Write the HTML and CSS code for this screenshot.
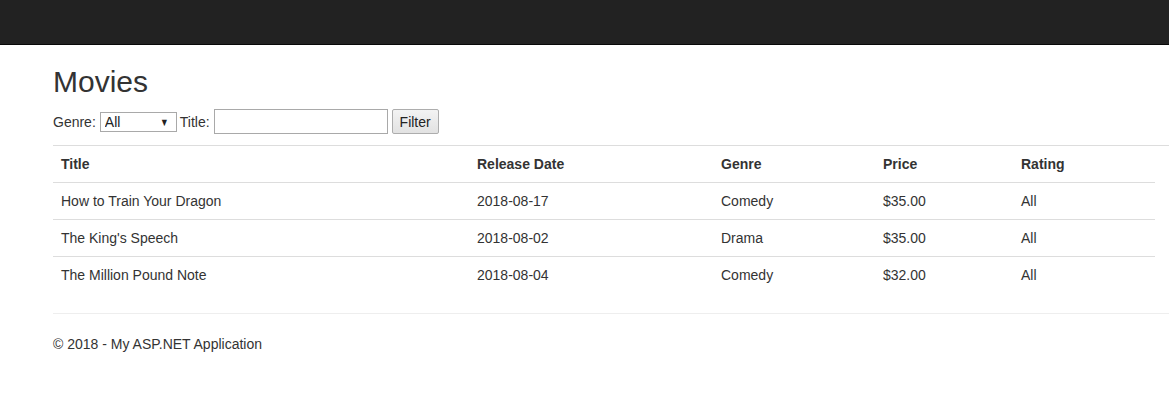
FILE: index.html
```html
<!DOCTYPE html>
<html>
<head>
<meta charset="utf-8">
<title>Movies</title>
<link rel="stylesheet" href="styles.css">
</head>
<body>
<header class="navbar"></header>
<main class="content">
  <h2 class="title">Movies</h2>
  <form class="filter">
    <label class="lbl">Genre:</label>
    <span class="select-wrap">
      <select class="select"><option>All</option></select>
      <span class="arrow">▼</span>
    </span>
    <label class="lbl">Title:</label>
    <input class="text-input" type="text">
    <button class="btn" type="button">Filter</button>
  </form>
  <div class="rule-top"></div>
  <table class="table">
    <colgroup>
      <col class="c1"><col class="c2"><col class="c3"><col class="c4"><col class="c5">
    </colgroup>
    <thead>
      <tr><th>Title</th><th>Release Date</th><th>Genre</th><th>Price</th><th>Rating</th></tr>
    </thead>
    <tbody>
      <tr><td>How to Train Your Dragon</td><td>2018-08-17</td><td>Comedy</td><td>$35.00</td><td>All</td></tr>
      <tr><td>The King's Speech</td><td>2018-08-02</td><td>Drama</td><td>$35.00</td><td>All</td></tr>
      <tr><td>The Million Pound Note</td><td>2018-08-04</td><td>Comedy</td><td>$32.00</td><td>All</td></tr>
    </tbody>
  </table>
  <hr class="footer-rule">
  <footer class="footer"><p>© 2018 - My ASP.NET Application</p></footer>
</main>
</body>
</html>
```
FILE: styles.css
```css
html, body {
  margin: 0;
  padding: 0;
  background: #fff;
}
body {
  font-family: "Liberation Sans", Arial, Helvetica, sans-serif;
  font-size: 14px;
  line-height: 20px;
  color: #333;
}
.navbar {
  height: 44px;
  background: #222;
  border-bottom: 1px solid #080808;
}
.content {
  padding-left: 53px;
}
.title {
  margin: 20px 0 11px;
  font-size: 30px;
  line-height: 33px;
  font-weight: 500;
  color: #333;
}
.filter {
  display: flex;
  align-items: center;
  height: 25px;
  margin: 0 0 11px;
}
.lbl {
  margin-right: 4px;
}
.select-wrap {
  position: relative;
  display: inline-block;
  margin-right: 3px;
}
.select {
  appearance: none;
  -webkit-appearance: none;
  display: block;
  width: 77px;
  height: 20px;
  box-sizing: border-box;
  border: 1px solid #a9a9a9;
  background: #fff;
  border-radius: 0;
  font-family: "Liberation Sans", Arial, sans-serif;
  font-size: 14px;
  color: #222;
  padding: 0 0 0 4px;
  margin: 0;
  line-height: 18px;
}
.arrow {
  position: absolute;
  right: 7px;
  top: 4px;
  font-size: 11px;
  line-height: 12px;
  color: #222;
  pointer-events: none;
  transform: scaleX(0.8);
}
.text-input {
  width: 174px;
  height: 25px;
  box-sizing: border-box;
  border: 1px solid #a9a9a9;
  margin: 0 4px 0 0;
  padding: 0 3px;
  font-family: "Liberation Sans", Arial, sans-serif;
  font-size: 14px;
}
.btn {
  width: 47px;
  height: 25px;
  box-sizing: border-box;
  border: 1px solid #adadad;
  border-radius: 2px;
  background: linear-gradient(#f3f3f3, #e2e2e2);
  font-family: "Liberation Sans", Arial, sans-serif;
  font-size: 14px;
  color: #222;
  padding: 0;
  margin: 0;
}
.rule-top {
  border-top: 1px solid #ddd;
}
.table {
  width: 1102px;
  border-collapse: collapse;
  border-spacing: 0;
}
.c1 { width: 416px; }
.c2 { width: 244px; }
.c3 { width: 162px; }
.c4 { width: 138px; }
.c5 { width: 142px; }
.table th, .table td {
  padding: 8px;
  text-align: left;
  vertical-align: top;
  line-height: 20px;
}
.table th {
  font-weight: bold;
}
.table tbody td {
  border-top: 1px solid #ddd;
}
.footer-rule {
  margin: 20px 0;
  border: 0;
  border-top: 1px solid #eee;
  height: 0;
}
.footer p {
  margin: 0 0 10px;
}
```
